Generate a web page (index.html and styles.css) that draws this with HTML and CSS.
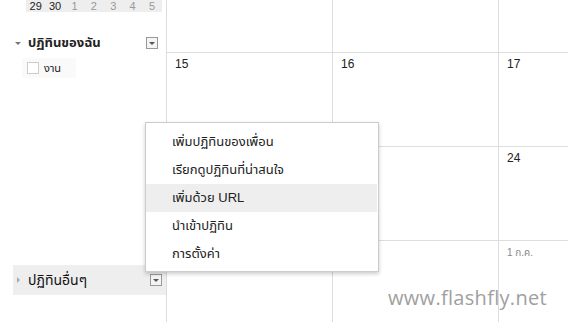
FILE: index.html
```html
<!DOCTYPE html>
<html lang="th">

<head>
    <meta charset="UTF-8">
    <meta name="viewport" content="width=device-width, initial-scale=1.0">
    <title>ปฏิทิน</title>
    <link rel="stylesheet" href="styles.css">
</head>

<body>
    <div class="page">
        <!-- Sidebar -->
        <div class="sidebar">
            <div class="mini-cal">
                <span class="day">29</span>
                <span class="day">30</span>
                <span class="day next">1</span>
                <span class="day next">2</span>
                <span class="day next">3</span>
                <span class="day next">4</span>
                <span class="day next">5</span>
            </div>

            <div class="cal-header">
                <span class="arrow-down"></span>
                <span class="cal-title">ปฏิทินของฉัน</span>
                <span class="drop-btn"></span>
            </div>
            <div class="cal-item">
                <span class="check"></span>
                <span class="cal-name">งาน</span>
            </div>

            <div class="cal-header other">
                <span class="arrow-right"></span>
                <span class="cal-title">ปฏิทินอื่นๆ</span>
                <span class="drop-btn"></span>
            </div>
        </div>

        <!-- Month grid -->
        <div class="month">
            <div class="cell"></div>
            <div class="cell"></div>
            <div class="cell"></div>
            <div class="cell"><span class="date">15</span></div>
            <div class="cell"><span class="date">16</span></div>
            <div class="cell"><span class="date">17</span></div>
            <div class="cell"></div>
            <div class="cell"></div>
            <div class="cell"><span class="date">24</span></div>
            <div class="cell"></div>
            <div class="cell"></div>
            <div class="cell"><span class="date muted">1 ก.ค.</span></div>
        </div>
    </div>

    <!-- Menu of "Other calendars" -->
    <ul class="menu">
        <li>เพิ่มปฏิทินของเพื่อน</li>
        <li>เรียกดูปฏิทินที่น่าสนใจ</li>
        <li class="hover">เพิ่มด้วย URL</li>
        <li>นำเข้าปฏิทิน</li>
        <li>การตั้งค่า</li>
    </ul>

    <div class="watermark">www.flashfly.net</div>
</body>

</html>
```

FILE: styles.css
```css
body {
    margin: 0;
    width: 568px;
    height: 322px;
    overflow: hidden;
    position: relative;
    background: #fff;
    font-family: "Liberation Sans", Tahoma, "Noto Sans Thai", sans-serif;
    color: #222;
}

.page {
    display: flex;
    height: 322px;
    overflow: hidden;
}
/* Sidebar */

.sidebar {
    width: 166px;
    flex-shrink: 0;
}

.mini-cal {
    display: flex;
    margin-left: 26px;
    width: 136px;
    height: 12px;
    background: #eee;
    font-size: 11px;
    line-height: 12px;
}

.day {
    width: 19.4px;
    text-align: center;
    color: #222;
}

.day.next {
    color: #999;
}

.cal-header {
    display: flex;
    align-items: center;
    height: 20px;
    margin-top: 21px;
    padding-left: 15px;
    padding-right: 8px;
    font-size: 13px;
    font-weight: bold;
    color: #222;
}

.cal-title {
    flex: 1;
    margin-left: 7px;
}

.arrow-down {
    width: 0;
    height: 0;
    border-left: 3px solid transparent;
    border-right: 3px solid transparent;
    border-top: 3px solid #777;
}

.arrow-right {
    width: 0;
    height: 0;
    border-top: 3px solid transparent;
    border-bottom: 3px solid transparent;
    border-left: 3px solid #aaa;
    margin-left: 1px;
}

.drop-btn {
    width: 10px;
    height: 10px;
    border: 1px solid #999;
    background: #f4f4f4;
    position: relative;
    box-sizing: content-box;
}

.drop-btn::after {
    content: "";
    position: absolute;
    left: 2px;
    top: 4px;
    border-left: 3px solid transparent;
    border-right: 3px solid transparent;
    border-top: 3px solid #555;
}

.cal-item {
    display: flex;
    align-items: center;
    height: 20px;
    width: 54px;
    margin-top: 5px;
    margin-left: 22px;
    padding-left: 5px;
    box-sizing: border-box;
    background: #fafafa;
    font-size: 11px;
}

.check {
    width: 10px;
    height: 10px;
    border: 1px solid #ccc;
    background: #fff;
}

.cal-name {
    margin-left: 5px;
}

.cal-header.other {
    margin-top: 187px;
    margin-left: 13px;
    height: 30px;
    padding-left: 3px;
    padding-right: 4px;
    background: #eee;
    font-size: 14px;
    font-weight: normal;
    color: #111;
}

.cal-header.other .cal-title {
    margin-left: 8px;
}
/* Month grid */

.month {
    flex: 1;
    min-width: 0;
    overflow: hidden;
    display: grid;
    grid-template-columns: 166px 166px 166px;
    grid-auto-rows: 94px;
    margin-top: -42px;
}

.cell {
    border-left: 1px solid #ddd;
    border-top: 1px solid #ddd;
    padding: 4px 8px;
    font-size: 12px;
    line-height: 14px;
}

.date.muted {
    color: #888;
    font-size: 10px;
}
/* Dropdown menu */

.menu {
    position: absolute;
    left: 145px;
    top: 122px;
    width: 231px;
    margin: 0;
    padding: 5px 1px 3px 0;
    list-style: none;
    background: #fff;
    border: 1px solid #ccc;
    box-shadow: 0 2px 4px rgba(0, 0, 0, 0.2);
    font-size: 13px;
}

.menu li {
    height: 28px;
    line-height: 28px;
    padding-left: 26px;
    color: #222;
}

.menu li.hover {
    background: #eee;
}

.watermark {
    position: absolute;
    left: 388px;
    top: 284px;
    font-family: "Open Sans", sans-serif;
    font-size: 20px;
    color: #a0a0a0;
    letter-spacing: 0.3px;
}
```
